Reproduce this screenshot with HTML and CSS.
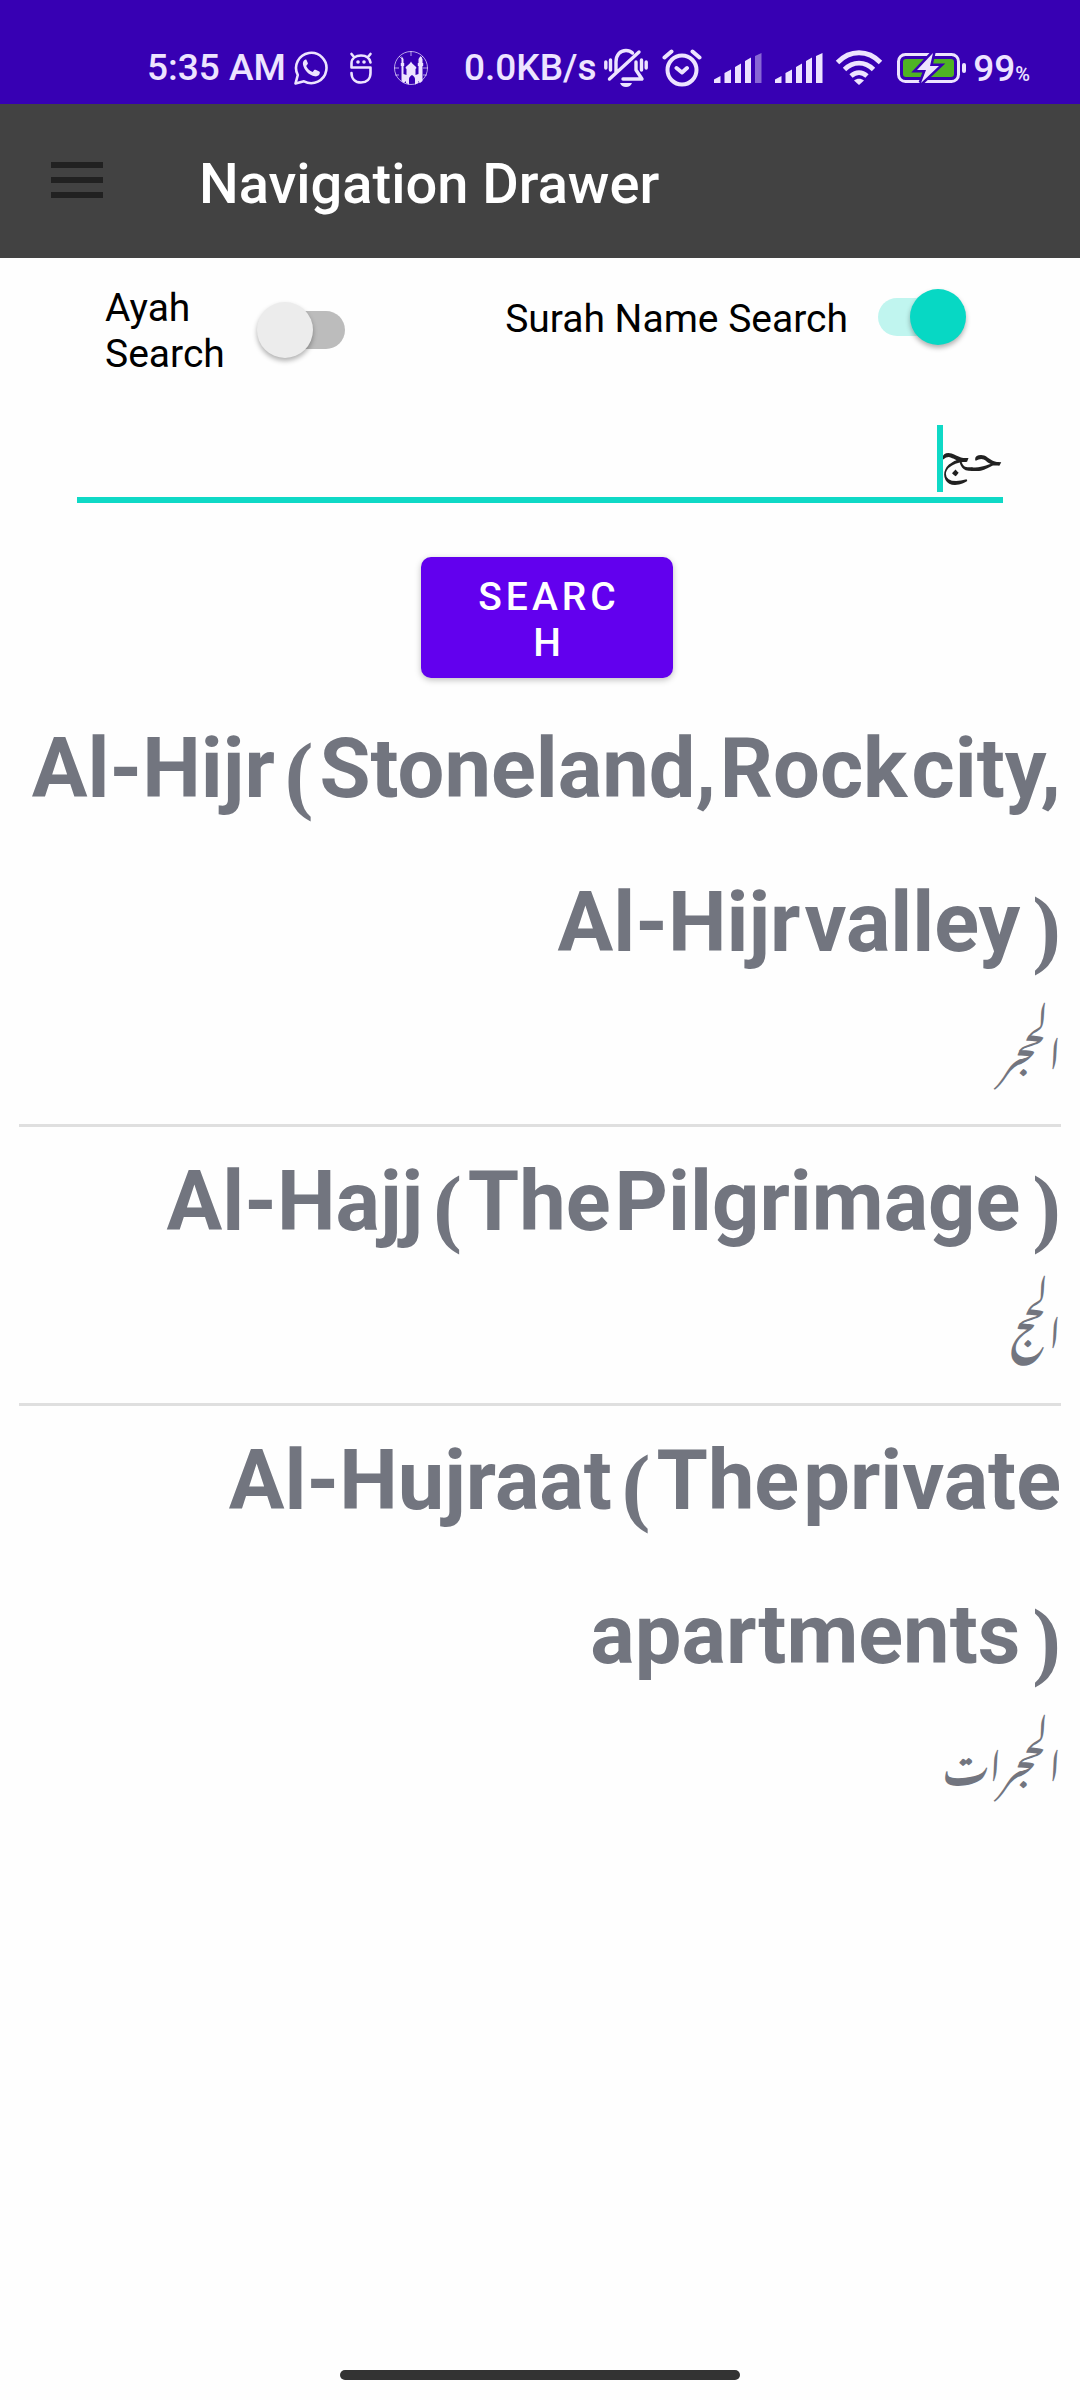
FILE: index.html
```html
<!DOCTYPE html>
<html lang="en">
<head>
<meta charset="utf-8">
<meta name="viewport" content="width=device-width, initial-scale=1">
<title>Navigation Drawer</title>
<link rel="stylesheet" href="styles.css">
</head>
<body>
<div class="status-bar">
  <div class="status-group">
    <span>5:35 AM</span>
    <svg class="icon-chat" width="36" height="36" viewBox="0 0 36 36" aria-hidden="true">
      <path d="M2.500 33.500l2.300-8.500A15.200 15.200 0 1 1 11 31.300z" fill="none" stroke="currentColor" stroke-width="2.600" stroke-linejoin="round"/>
      <path d="M12.500 9.500c-2 .8-3 2.800-2.500 5.200 1.200 5.600 6 10.400 11.800 11.600 2.500.4 4.600-.8 5-3.200.2-.8 0-1.200-.6-1.500l-3.600-1.800c-.6-.3-1-.2-1.400.3l-1.500 1.900c-3-1.100-5.200-3.200-6.500-6l1.500-1.900c.3-.4.3-.8.1-1.200l-1.400-3.100c-.2-.4-.5-.4-.9-.3z" fill="currentColor"/>
    </svg>
    <svg class="icon-droid" width="24" height="32" viewBox="0 0 24 32" aria-hidden="true">
      <g fill="none" stroke="currentColor" stroke-width="2.600" stroke-linecap="round" stroke-linejoin="round">
        <path d="M2.500 2l2.500 3M21.500 2L19 5M21.500 10.500C20.500 5.500 17 3.500 12 3.500S2.500 6 2.500 11.500V15.500H21.500V21c0 6-4 9.500-9.500 9.500S2.500 27 2.500 21"/>
      </g>
      <circle cx="9" cy="10" r="1.800" fill="currentColor"/><circle cx="15" cy="10" r="1.800" fill="currentColor"/>
    </svg>
    <svg class="icon-mosque" width="36" height="36" viewBox="0 0 36 36" aria-hidden="true">
      <circle cx="18" cy="18" r="16.500" fill="none" stroke="currentColor" stroke-width="1" opacity=".7"/>
      <path d="M18 1v5M1 18h5M30 18h5M6 6l3 3M30 6l-3 3M2 25h4M30 25h4" stroke="currentColor" stroke-width="1" opacity=".7"/>
      <path d="M8.500 6l2 3v4h.7v3h-.7v8l3 1v-6l-1-1c.5-2.200 3.800-3 5.500-6.500 1.700 3.500 5 4.300 5.500 6.500l-1 1v6l3-1v-8h-.7v-3h.7V9l2-3 2 3v4h.7v3h-.7v15l-2.500 2-2-2v2l-3 1.500v-5.500c0-1.800-1.500-3-3-4-1.500 1-3 2.200-3 4v5.500l-3-1.500v-2l-2 2-2.500-2V16h-.7v-3h.7V9z" fill="currentColor"/>
    </svg>
    <span class="net-speed">0.0KB/s</span>
  </div>
  <div class="status-group">
    <svg width="44" height="40" viewBox="0 0 44 40" aria-hidden="true">
      <g fill="none" stroke="currentColor" stroke-width="3.400" stroke-linecap="round" stroke-linejoin="round">
        <path d="M12 24V14C12 7 16 2.500 22 2.500c3 0 5 1 6.500 2.500M32 14v8l6 9H19M5.500 31L35 4M1.800 14v6M6.500 12v10M37.500 12v10M42.200 14v6"/>
      </g>
      <path d="M16 35h12c-1 2.500-3 4-6 4s-5-1.500-6-4z" fill="currentColor"/>
    </svg>
    <svg class="icon-alarm" width="40" height="40" viewBox="0 0 40 40" aria-hidden="true">
      <g fill="none" stroke="currentColor" stroke-width="4" stroke-linecap="round" stroke-linejoin="round">
        <circle cx="20" cy="22" r="14.500"/><path d="M2.500 9.500L9.500 3.500M37.500 9.500L30.500 3.500M14.500 20l5.500 4.500 5-4.500"/>
      </g>
    </svg>
    <svg class="icon-signal" width="50" height="32" viewBox="0 0 50 32" aria-hidden="true">
      <path d="M1 31V27.500L7.500 24V31zM11.500 31V21l6.500-3.500V31zM22 31V15l6-3.500V31zM32 31V9l6-3.500V31z" fill="currentColor"/>
      <path d="M42 31V4l6.500-3V31z" fill="currentColor" opacity=".45"/>
    </svg>
    <svg class="icon-signal" width="50" height="32" viewBox="0 0 50 32" aria-hidden="true">
      <path d="M1 31V27.500L7.500 24V31zM11.500 31V21l6.500-3.500V31zM22 31V15l6-3.500V31zM32 31V9l6-3.500V31zM42 31V4l6.500-3V31z" fill="currentColor"/>
    </svg>
    <svg class="icon-wifi" width="48" height="36" viewBox="0 0 48 36" aria-hidden="true">
      <path d="M2.500 12.500C15-.5 33-.5 45.500 12.500M9.500 19.500c8.500-8.500 20.500-8.500 29 0M16 26c5-4.500 11-4.500 16 0" fill="none" stroke="currentColor" stroke-width="4.800"/>
      <path d="M19 30.500c3-2.500 7-2.500 10 0L24 35z" fill="currentColor"/>
    </svg>
    <svg class="icon-battery" width="70" height="34" viewBox="0 0 70 34" aria-hidden="true">
      <rect x="1.500" y="3.500" width="60" height="27" rx="7" fill="none" stroke="currentColor" stroke-width="3"/>
      <rect x="6" y="8" width="51" height="18" rx="3" fill="#4fb324"/>
      <rect x="65" y="12" width="4" height="10" rx="2" fill="currentColor"/>
      <path d="M36 2L20 19h9l-5 13L42 15h-9z" fill="currentColor" stroke="#3700b3" stroke-width="5" paint-order="stroke"/>
    </svg>
    <span class="charge">99<small class="percent">%</small></span>
  </div>
</div>

<header class="app-bar">
  <button class="menu-button" type="button" aria-label="Open navigation menu">
    <svg width="52" height="36" viewBox="0 0 52 36" aria-hidden="true"><path d="M0 0h52v6H0zM0 15h52v6H0zM0 30h52v6H0z" fill="#212121"/></svg>
  </button>
  <h1 class="app-title">Navigation Drawer</h1>
</header>

<main class="content">
  <form class="search-form">
    <div class="switches">
      <label class="switch switch-ayah"><span class="switch-text">Ayah Search</span><input class="toggle" type="checkbox" role="switch"></label>
      <label class="switch switch-surah"><span class="switch-text">Surah Name Search</span><input class="toggle" type="checkbox" role="switch" checked></label>
    </div>
    <div class="field">
      <input class="query" type="text" dir="rtl" value="حج" aria-label="Search text">
      <span class="caret"></span>
    </div>
    <button class="search-button" type="button">SEARCH</button>
  </form>

  <ul class="results">
    <li class="result">
      <h2 class="result-title"><span>Al-Hijr</span> <span><span class="paren">(</span>Stoneland,</span> <span>Rock</span> <span>city,</span> <span>Al-Hijr</span> <span>valley<span class="paren paren-close">)</span></span></h2>
      <p class="result-arabic" lang="ar" dir="rtl">الحجر</p>
    </li>
    <li class="result">
      <h2 class="result-title"><span>Al-Hajj</span> <span><span class="paren">(</span>The</span> <span>Pilgrimage<span class="paren paren-close">)</span></span></h2>
      <p class="result-arabic" lang="ar" dir="rtl">الحج</p>
    </li>
    <li class="result">
      <h2 class="result-title"><span>Al-Hujraat</span> <span><span class="paren">(</span>The</span> <span>private</span> <span>apartments<span class="paren paren-close">)</span></span></h2>
      <p class="result-arabic" lang="ar" dir="rtl">الحجرات</p>
    </li>
  </ul>
</main>
<div class="home-indicator"></div>
</body>
</html>
```
FILE: styles.css
```css
* {
  box-sizing: border-box;
}

body {
  display: flex;
  flex-direction: column;
  min-height: 100vh;
  margin: 0;
  background: #fefefe;
  color: #000;
  font: 400 39px/46px Roboto, sans-serif;
}

svg {
  display: block;
  flex: none;
}

/* System status bar */
.status-bar {
  display: flex;
  justify-content: space-between;
  height: 104px;
  padding: 32px 50px 0 147px;
  background: #3700b3;
  color: #ede4ff;
  font-size: 37px;
  font-weight: 500;
  white-space: nowrap;
}

.status-group {
  display: flex;
  align-items: center;
}

.icon-chat { margin-left: 7px; }
.icon-droid { margin-left: 20px; }
.icon-mosque { margin-left: 20px; }
.net-speed { margin-left: 35px; }
.icon-alarm { margin-left: 14px; }
.icon-signal { margin-left: 11px; }
.icon-wifi { margin-left: 11px; }
.icon-battery { margin-left: 14px; }
.charge { margin-left: 6px; line-height: 1; }
.percent { font-size: 20px; line-height: 1; }

/* App bar */
.app-bar {
  display: flex;
  align-items: center;
  height: 154px;
  padding: 0 51px 2px;
  background: #424242;
}

.menu-button {
  padding: 0;
  border: 0;
  background: none;
}

.app-title {
  margin: 8px 0 0 96px;
  color: #fff;
  font-size: 56px;
  font-weight: 500;
  line-height: 64px;
}

/* Search form */
.content {
  flex: 1;
}

.search-form {
  display: flex;
  flex-direction: column;
  padding: 24px 77px 0;
}

.switches {
  display: flex;
  justify-content: space-between;
  align-items: flex-start;
  padding: 0 37px 0 28px;
}

.switch {
  display: flex;
  align-items: center;
}

.switch-text {
  padding-top: 3px;
}

.switch-ayah {
  gap: 24px;
}

.switch-ayah .switch-text {
  width: 128px;
}

.switch-surah {
  gap: 30px;
  min-height: 70px;
}

.toggle {
  display: flex;
  align-items: center;
  flex: none;
  width: 88px;
  height: 38px;
  margin: 0;
  border-radius: 19px;
  appearance: none;
  background: linear-gradient(to right, transparent 20px, #bcbcbc 20px);
}

.toggle::before {
  content: "";
  width: 56px;
  height: 56px;
  border-radius: 50%;
  background: #ececec;
  box-shadow: 0 3px 5px rgba(0, 0, 0, 0.3);
}

.toggle:checked {
  justify-content: flex-end;
  background: linear-gradient(to left, transparent 20px, #c0f5ef 20px);
}

.toggle:checked::before {
  background: #07d8c4;
}

.field {
  position: relative;
  margin-top: 46px;
}

.query {
  display: block;
  width: 100%;
  height: 80px;
  padding: 0;
  border: 0;
  border-bottom: 6px solid #0fd9c6;
  outline: 0;
  background: transparent;
  color: #212121;
  font: 400 49px "Noto Naskh Arabic", "Noto Sans Arabic", "DejaVu Sans", sans-serif;
}

.caret {
  position: absolute;
  right: 60px;
  bottom: 11px;
  width: 6px;
  height: 67px;
  background: #0fd9c6;
}

.search-button {
  align-self: center;
  width: 252px;
  margin: 54px 0 0 14px;
  padding: 17px 46px 12px 50px;
  border: 0;
  border-radius: 10px;
  background: #6200ee;
  box-shadow: 0 2px 6px rgba(0, 0, 0, 0.25);
  color: #fff;
  font: 500 39px/46px Roboto, sans-serif;
  letter-spacing: 4px;
  overflow-wrap: anywhere;
}

/* Results */
.results {
  margin: 16px 19px 0;
  padding: 0;
  list-style: none;
  color: #72757f;
}

.result + .result {
  border-top: 3px solid #dfdfdf;
}

.result-title {
  display: flex;
  flex-wrap: wrap;
  justify-content: flex-end;
  column-gap: 4px;
  margin: -2px 0 0;
  font-size: 83px;
  font-weight: 700;
  line-height: 154px;
}

.paren {
  margin: 0 6px;
  font: 700 86px/1 "Liberation Serif", serif;
  vertical-align: -6px;
}

.paren-close {
  margin: 0 0 0 12px;
}

.result-arabic {
  height: 124px;
  margin: 0;
  font: 600 38px/98px "Noto Nastaliq Urdu", "Noto Naskh Arabic", "DejaVu Sans", sans-serif;
}

.home-indicator {
  flex: none;
  align-self: center;
  width: 37%;
  height: 10px;
  margin-bottom: 20px;
  border-radius: 5px;
  background: #333;
}
```
